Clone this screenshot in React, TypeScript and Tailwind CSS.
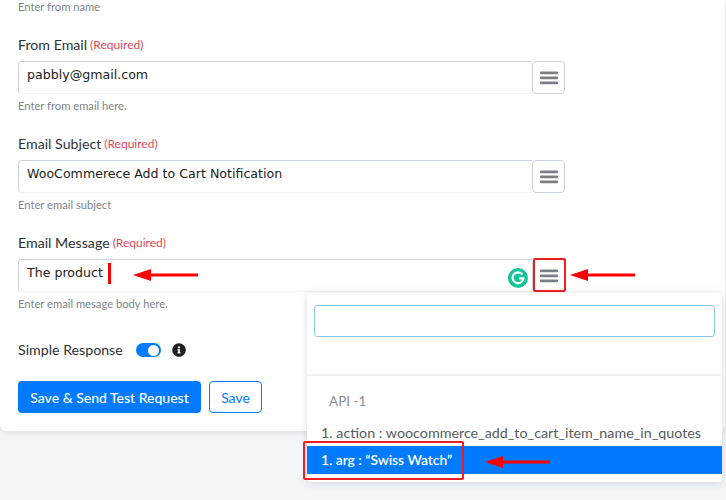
import { FaInfoCircle } from "react-icons/fa";

const labelFont = "font-['Lato','Noto_Sans',sans-serif]";

function MenuIcon() {
  return (
    <svg width="18" height="14" viewBox="0 0 18 14" className="block">
      <rect x="0" y="0.5" width="18" height="2.8" rx="1" fill="#7b7f85" />
      <rect x="0" y="5.5" width="18" height="2.8" rx="1" fill="#7b7f85" />
      <rect x="0" y="10.5" width="18" height="2.8" rx="1" fill="#7b7f85" />
    </svg>
  );
}

function Arrow({ className }: { className: string }) {
  return (
    <svg width="66" height="14" viewBox="0 0 66 14" className={`absolute ${className}`}>
      <path d="M0 7 L18 1 L18 5.5 L65 5.5 L65 8.5 L18 8.5 L18 13 Z" fill="#ff0000" />
    </svg>
  );
}

function Field({ label, value, hint }: { label: string; value: string; hint: string }) {
  return (
    <div className="mb-5">
      <div className="flex h-5 items-center gap-[3px] pt-px">
        <span className={`${labelFont} text-[14.2px] text-[#2b3238]`}>{label}</span>
        <span className={`${labelFont} text-[12px] text-[#dc4a5a]`}>(Required)</span>
      </div>
      <div className="mt-[7px] flex h-[33px] w-[547px]">
        <div className="flex-1 rounded-l-[4px] border border-r-0 border-[#ced4de] border-b-[#f3f4f7] pl-2 pt-[3px] font-['DejaVu_Sans',sans-serif] text-[12.6px] leading-5 text-[#1c1c1c]">
          {value}
        </div>
        <div className="flex w-[33px] items-center justify-center rounded-[4px] border border-[#ced4de] bg-white">
          <MenuIcon />
        </div>
      </div>
      <div className={`${labelFont} mt-[5px] h-[14px] text-[11.2px] leading-[14px] text-[#7d858c]`}>{hint}</div>
    </div>
  );
}

export default function App() {
  return (
    <div className="relative h-[500px] w-[726px] overflow-hidden bg-[#f3f6f9]">
      <div className="w-[725px] rounded-b-[6px] bg-white pb-[18px] pl-[18px] shadow-[0_1px_6px_rgba(60,70,90,0.14)]">
        <div className={`${labelFont} mb-[21px] h-[13px] text-[11.2px] leading-[13px] text-[#7d858c]`}>Enter from name</div>
        <Field label="From Email" value="pabbly@gmail.com" hint="Enter from email here." />
        <Field label="Email Subject" value="WooCommerece Add to Cart Notification" hint="Enter email subject" />
        <Field label="Email Message" value="The product" hint="Enter email mesage body here." />
        <div className="mt-[29px] flex h-5 items-center">
          <span className={`${labelFont} w-[118px] text-[14.2px] text-[#2b3238]`}>Simple Response</span>
          <span className="flex h-[14px] w-[25px] items-center justify-end rounded-full bg-[#007bff] pr-[2px]">
            <span className="h-[11px] w-[11px] rounded-full bg-white" />
          </span>
          <FaInfoCircle className="ml-[11px] -mt-[1px] h-[14px] w-[14px] text-[#1d1f22]" />
        </div>
        <div className="mt-[21px] flex gap-2">
          <button className={`${labelFont} h-8 w-[183px] rounded-[4px] bg-[#007bff] text-[14px] font-medium text-white`}>
            Save &amp; Send Test Request
          </button>
          <button className={`${labelFont} h-8 w-[53px] rounded-[4px] border border-[#007bff] bg-white text-[14px] text-[#007bff]`}>
            Save
          </button>
        </div>
      </div>

      {/* Dropdown over the form */}
      <div className="absolute left-[307px] top-[293px] w-[415px] rounded-[4px] bg-white pb-2 shadow-[0_1px_8px_rgba(60,70,90,0.18)]">
        <div className="h-[83px] border-b-2 border-[#f1f2f4] px-[7px] pt-3">
          <div className="h-[32px] rounded-[3px] border border-[#8cc4f8] bg-white" />
        </div>
        <div className={`${labelFont} flex h-[50px] items-center pl-[22px] text-[13.5px] text-[#8a8f95]`}>API -1</div>
        <div className={`${labelFont} h-5 pl-[14px] text-[14.3px] leading-[13px] text-[#555b61]`}>
          1. action : woocommerce_add_to_cart_item_name_in_quotes
        </div>
        <div className={`${labelFont} flex h-[28px] items-center bg-[#007bff] pl-[14px] text-[13.8px] font-semibold text-white`}>
          1. arg : “Swiss Watch”
        </div>
      </div>

      {/* Grammarly badge */}
      <span className="absolute left-[508px] top-[268px] flex h-5 w-5 items-center justify-center rounded-full bg-[#15c39a]">
        <svg width="14" height="14" viewBox="0 0 13 13" fill="none" stroke="white" strokeWidth="2">
          <path d="M10.6 3.4 A5 5 0 1 0 11.5 6.8 L7.5 6.8" />
        </svg>
      </span>

      {/* Screenshot annotations */}
      <span className="absolute left-[108px] top-[263px] h-[21px] w-[3px] bg-[#ff0000]" />
      <Arrow className="left-[133px] top-[268px]" />
      <Arrow className="left-[570px] top-[268px]" />
      <Arrow className="left-[485px] top-[455px]" />
      <span className="absolute left-[533px] top-[258px] h-[34px] w-[33px] rounded-[2px] border-2 border-[#ee1c25]" />
      <span className="absolute left-[303px] top-[441px] h-[39px] w-[161px] rounded-[2px] border-2 border-[#ee1c25]" />
    </div>
  );
}
